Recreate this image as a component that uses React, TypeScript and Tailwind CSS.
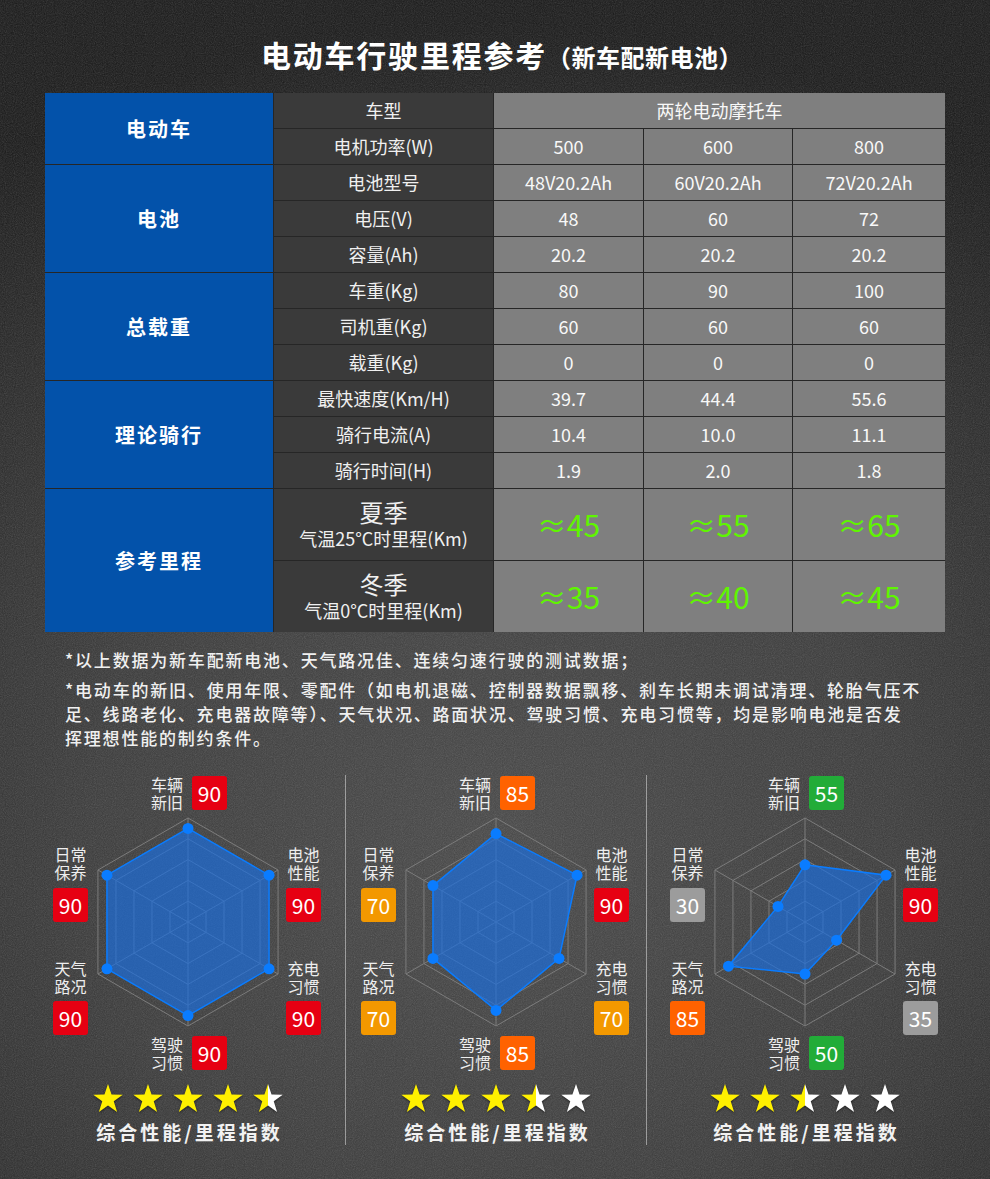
import { useId } from "react";

type Row = { label: string; values: string[] };

const GROUPS: { title: string; rows: Row[] }[] = [
  {
    title: "电池",
    rows: [
      { label: "电池型号", values: ["48V20.2Ah", "60V20.2Ah", "72V20.2Ah"] },
      { label: "电压(V)", values: ["48", "60", "72"] },
      { label: "容量(Ah)", values: ["20.2", "20.2", "20.2"] },
    ],
  },
  {
    title: "总载重",
    rows: [
      { label: "车重(Kg)", values: ["80", "90", "100"] },
      { label: "司机重(Kg)", values: ["60", "60", "60"] },
      { label: "载重(Kg)", values: ["0", "0", "0"] },
    ],
  },
  {
    title: "理论骑行",
    rows: [
      { label: "最快速度(Km/H)", values: ["39.7", "44.4", "55.6"] },
      { label: "骑行电流(A)", values: ["10.4", "10.0", "11.1"] },
      { label: "骑行时间(H)", values: ["1.9", "2.0", "1.8"] },
    ],
  },
];

const BADGE: Record<string, string> = {
  red: "bg-[#e60012]",
  orange: "bg-[#ff6200]",
  amber: "bg-[#f39800]",
  green: "bg-[#22ac38]",
  gray: "bg-[#9c9c9c]",
};

type Axis = { label: [string, string]; value: number; color: keyof typeof BADGE };

// order: top, upper-right, lower-right, bottom, lower-left, upper-left
const CHARTS: { axes: Axis[]; rating: number }[] = [
  {
    rating: 4.5,
    axes: [
      { label: ["车辆", "新旧"], value: 90, color: "red" },
      { label: ["电池", "性能"], value: 90, color: "red" },
      { label: ["充电", "习惯"], value: 90, color: "red" },
      { label: ["驾驶", "习惯"], value: 90, color: "red" },
      { label: ["天气", "路况"], value: 90, color: "red" },
      { label: ["日常", "保养"], value: 90, color: "red" },
    ],
  },
  {
    rating: 3.5,
    axes: [
      { label: ["车辆", "新旧"], value: 85, color: "orange" },
      { label: ["电池", "性能"], value: 90, color: "red" },
      { label: ["充电", "习惯"], value: 70, color: "amber" },
      { label: ["驾驶", "习惯"], value: 85, color: "orange" },
      { label: ["天气", "路况"], value: 70, color: "amber" },
      { label: ["日常", "保养"], value: 70, color: "amber" },
    ],
  },
  {
    rating: 2.5,
    axes: [
      { label: ["车辆", "新旧"], value: 55, color: "green" },
      { label: ["电池", "性能"], value: 90, color: "red" },
      { label: ["充电", "习惯"], value: 35, color: "gray" },
      { label: ["驾驶", "习惯"], value: 50, color: "green" },
      { label: ["天气", "路况"], value: 85, color: "orange" },
      { label: ["日常", "保养"], value: 30, color: "gray" },
    ],
  },
];

const CX = 150;
const CY = 147;
const R = 104;

function pt(i: number, r: number) {
  const a = ((-90 + 60 * i) * Math.PI) / 180;
  return [CX + r * Math.cos(a), CY + r * Math.sin(a)];
}

function hex(r: number) {
  return [0, 1, 2, 3, 4, 5].map((i) => pt(i, r).join(",")).join(" ");
}

function Badge({ value, color }: { value: number; color: keyof typeof BADGE }) {
  return (
    <div
      className={`${BADGE[color]} w-[35px] h-[34px] rounded-[3px] flex items-center justify-center text-[21px] text-white leading-none`}
    >
      {value}
    </div>
  );
}

function AxisText({ label }: { label: [string, string] }) {
  return (
    <div className="text-[16px] leading-[18px] text-[#eeeeee] text-center">
      {label[0]}
      <br />
      {label[1]}
    </div>
  );
}

function Star({ fill }: { fill: number }) {
  const id = useId();
  const pts = Array.from({ length: 10 }, (_, i) => {
    const r = i % 2 === 0 ? 50 : 19.5;
    const a = ((-90 + 36 * i) * Math.PI) / 180;
    return `${50 + r * Math.cos(a)},${53 + r * Math.sin(a)}`;
  }).join(" ");
  return (
    <svg width="32" height="31" viewBox="0 0 100 100" className="drop-shadow-[0_1px_1px_rgba(0,0,0,0.5)]">
      <defs>
        <linearGradient id={id} x1="0" x2="1" y1="0" y2="0">
          <stop offset={fill} stopColor="#fff000" />
          <stop offset={fill} stopColor="#ffffff" />
        </linearGradient>
      </defs>
      <polygon points={pts} fill={`url(#${id})`} />
    </svg>
  );
}

function Radar({ axes, rating }: { axes: Axis[]; rating: number }) {
  const data = axes.map((a, i) => pt(i, (a.value / 100) * R));
  const [top, ur, lr, bottom, ll, ul] = axes;
  return (
    <div className="w-[300px] flex flex-col items-center">
      <div className="relative w-[300px] h-[300px]">
        <svg width="300" height="300" className="absolute left-0 top-0">
          {[1, 2, 3, 4, 5].map((k) => (
            <polygon key={k} points={hex((R * k) / 5)} fill="none" stroke="#7c7c7c" strokeWidth="1" />
          ))}
          {[0, 1, 2].map((i) => {
            const [x1, y1] = pt(i, R);
            const [x2, y2] = pt(i + 3, R);
            return <line key={i} x1={x1} y1={y1} x2={x2} y2={y2} stroke="#7c7c7c" strokeWidth="1" />;
          })}
          <polygon
            points={data.map((p) => p.join(",")).join(" ")}
            fill="#1a6ee0"
            fillOpacity="0.68"
            stroke="#0a7cff"
            strokeWidth="1.5"
          />
          {data.map(([x, y], i) => (
            <circle key={i} cx={x} cy={y} r="5.5" fill="#0a7cff" />
          ))}
        </svg>

        <div className="absolute left-[113px] top-0 flex items-center gap-[9px]">
          <AxisText label={top.label} />
          <Badge value={top.value} color={top.color} />
        </div>
        <div className="absolute left-[248px] top-[70px] flex flex-col items-center gap-[7px]">
          <AxisText label={ur.label} />
          <Badge value={ur.value} color={ur.color} />
        </div>
        <div className="absolute left-[248px] top-[184px] flex flex-col items-center gap-[6px]">
          <AxisText label={lr.label} />
          <Badge value={lr.value} color={lr.color} />
        </div>
        <div className="absolute left-[113px] top-[260px] flex items-center gap-[9px]">
          <AxisText label={bottom.label} />
          <Badge value={bottom.value} color={bottom.color} />
        </div>
        <div className="absolute left-[15px] top-[184px] flex flex-col items-center gap-[6px]">
          <AxisText label={ll.label} />
          <Badge value={ll.value} color={ll.color} />
        </div>
        <div className="absolute left-[15px] top-[70px] flex flex-col items-center gap-[7px]">
          <AxisText label={ul.label} />
          <Badge value={ul.value} color={ul.color} />
        </div>
      </div>

      <div className="mt-[8px] flex gap-[8px]">
        {[0, 1, 2, 3, 4].map((i) => (
          <Star key={i} fill={Math.max(0, Math.min(1, rating - i))} />
        ))}
      </div>
      <div className="mt-[6px] pl-[3px] text-[19px] leading-[24px] font-bold tracking-[3px] text-[#f2f2f2]">
        综合性能/里程指数
      </div>
    </div>
  );
}

const cellDark = "bg-[#3a3a3a] flex items-center justify-center text-[18px] text-[#f0f0f0]";
const cellGray = "bg-[#7f7f7f] flex items-center justify-center text-[18px] text-[#f8f8f8]";
const cellGreen = "bg-[#7f7f7f] flex items-center justify-center text-[30px] text-[#5ff500]";
const cellBlue = "bg-[#0352aa] flex items-center justify-center text-[20px] font-bold tracking-[2px] text-white";

export default function App() {
  return (
    <div className="relative w-[990px] h-[1179px] overflow-hidden font-['Noto_Sans_CJK_SC','Noto_Sans',sans-serif] text-white bg-[radial-gradient(ellipse_90%_70%_at_50%_72%,#474747_0%,#3a3a3a_45%,#262626_80%,#181818_100%)]">
      {/* chalkboard grain */}
      <svg className="absolute inset-0 pointer-events-none opacity-[0.22]" width="990" height="1179">
        <filter id="grain">
          <feTurbulence type="fractalNoise" baseFrequency="0.9" numOctaves="2" stitchTiles="stitch" />
          <feColorMatrix type="saturate" values="0" />
        </filter>
        <rect width="990" height="1179" filter="url(#grain)" />
      </svg>

      <div className="relative">
        {/* Title */}
        <div className="pt-[34px] pl-[14px] flex items-baseline justify-center font-bold">
          <span className="text-[30px] leading-[40px] tracking-[1.8px]">电动车行驶里程参考</span>
          <span className="text-[24px] leading-[40px] tracking-[0.5px]">（新车配新电池）</span>
        </div>

        {/* Table */}
        <div className="mt-[16px] ml-[45px] w-[900px] grid grid-cols-[228px_219px_149px_148px_152px] grid-rows-[repeat(11,35px)_71px_71px] gap-px bg-[#262626]">
          <div className={`${cellBlue} row-span-2`}>电动车</div>
          <div className={cellDark}>车型</div>
          <div className={`${cellGray} col-span-3`}>两轮电动摩托车</div>
          <div className={cellDark}>电机功率(W)</div>
          <div className={cellGray}>500</div>
          <div className={cellGray}>600</div>
          <div className={cellGray}>800</div>

          {GROUPS.map((g) => [
            <div key={g.title} className={`${cellBlue} row-span-3`}>
              {g.title}
            </div>,
            ...g.rows.flatMap((r) => [
              <div key={`${g.title}-${r.label}`} className={cellDark}>
                {r.label}
              </div>,
              ...r.values.map((v, vi) => (
                <div key={`${r.label}-${vi}`} className={cellGray}>
                  {v}
                </div>
              )),
            ]),
          ])}

          <div className={`${cellBlue} row-span-2`}>参考里程</div>
          <div className="bg-[#3a3a3a] flex flex-col items-center justify-center text-[#f0f0f0] pb-[2px]">
            <div className="text-[24px] leading-[28px]">夏季</div>
            <div className="text-[18px] leading-[24px]">气温25°C时里程(Km)</div>
          </div>
          <div className={cellGreen}>≈45</div>
          <div className={cellGreen}>≈55</div>
          <div className={cellGreen}>≈65</div>
          <div className="bg-[#3a3a3a] flex flex-col items-center justify-center text-[#f0f0f0] pb-[2px]">
            <div className="text-[24px] leading-[28px]">冬季</div>
            <div className="text-[18px] leading-[24px]">气温0°C时里程(Km)</div>
          </div>
          <div className={cellGreen}>≈35</div>
          <div className={cellGreen}>≈40</div>
          <div className={cellGreen}>≈45</div>
        </div>

        {/* Notes */}
        <div className="mt-[16px] pl-[65px] text-[17px] leading-[24px] tracking-[1.8px] font-medium text-[#f0f0f0] whitespace-nowrap">
          <p>*以上数据为新车配新电池、天气路况佳、连续匀速行驶的测试数据；</p>
          <p className="mt-[6px]">
            *电动车的新旧、使用年限、零配件（如电机退磁、控制器数据飘移、刹车长期未调试清理、轮胎气压不
            <br />
            足、线路老化、充电器故障等）、天气状况、路面状况、驾驶习惯、充电习惯等，均是影响电池是否发
            <br />
            挥理想性能的制约条件。
          </p>
        </div>

        {/* Radar charts */}
        <div className="mt-[25px] pl-[38px] flex">
          <div className="w-[307px]">
            <Radar {...CHARTS[0]} />
          </div>
          <div className="w-px h-[370px] bg-white/45" />
          <div className="w-[300px]">
            <Radar {...CHARTS[1]} />
          </div>
          <div className="w-px h-[370px] bg-white/45" />
          <div className="ml-[8px]">
            <Radar {...CHARTS[2]} />
          </div>
        </div>
      </div>
    </div>
  );
}
